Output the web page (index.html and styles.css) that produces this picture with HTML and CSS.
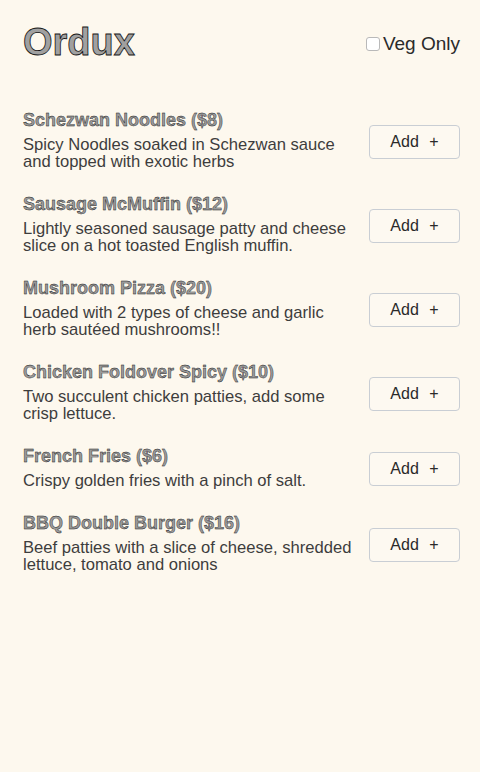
FILE: index.html
```html
<!DOCTYPE html>
<html>
<head>
<meta charset="utf-8">
<link rel="stylesheet" href="styles.css">
</head>
<body>
<div class="app">
  <header class="header">
    <h1 class="logo">Ordux</h1>
    <label class="veg"><span class="box"></span>Veg Only</label>
  </header>
  <ul class="menu">
    <li class="item">
      <div class="info">
        <div class="name">Schezwan Noodles ($8)</div>
        <div class="desc">Spicy Noodles soaked in Schezwan sauce and topped with exotic herbs</div>
      </div>
      <button class="add">Add <span class="plus">+</span></button>
    </li>
    <li class="item">
      <div class="info">
        <div class="name">Sausage McMuffin ($12)</div>
        <div class="desc">Lightly seasoned sausage patty and cheese slice on a hot toasted English muffin.</div>
      </div>
      <button class="add">Add <span class="plus">+</span></button>
    </li>
    <li class="item">
      <div class="info">
        <div class="name">Mushroom Pizza ($20)</div>
        <div class="desc">Loaded with 2 types of cheese and garlic herb sautéed mushrooms!!</div>
      </div>
      <button class="add">Add <span class="plus">+</span></button>
    </li>
    <li class="item">
      <div class="info">
        <div class="name">Chicken Foldover Spicy ($10)</div>
        <div class="desc">Two succulent chicken patties, add some crisp lettuce.</div>
      </div>
      <button class="add">Add <span class="plus">+</span></button>
    </li>
    <li class="item">
      <div class="info">
        <div class="name">French Fries ($6)</div>
        <div class="desc">Crispy golden fries with a pinch of salt.</div>
      </div>
      <button class="add">Add <span class="plus">+</span></button>
    </li>
    <li class="item">
      <div class="info">
        <div class="name">BBQ Double Burger ($16)</div>
        <div class="desc">Beef patties with a slice of cheese, shredded lettuce, tomato and onions</div>
      </div>
      <button class="add">Add <span class="plus">+</span></button>
    </li>
  </ul>
</div>
</body>
</html>
```
FILE: styles.css
```css
html, body {
  margin: 0;
  padding: 0;
  background: #fdf8ee;
  height: 100%;
}
body {
  font-family: "Liberation Sans", Arial, sans-serif;
  color: #3d3d3d;
}
.app {
  padding: 20px 20px 20px 23px;
}
.header {
  display: flex;
  align-items: center;
  justify-content: space-between;
  height: 44px;
}
.logo {
  margin: 0;
  font-size: 38px;
  font-weight: bold;
  color: #a0a0a0;
  -webkit-text-stroke: 0.8px #151515;
}
.veg {
  display: flex;
  align-items: center;
  gap: 3px;
  font-size: 19px;
  color: #2a2a2a;
  margin-top: 3px;
}
.box {
  width: 12px;
  height: 12px;
  border: 1px solid #b9b9b9;
  border-radius: 3px;
  background: #fff;
}
.menu {
  list-style: none;
  margin: 46px 0 0;
  padding: 0;
  display: flex;
  flex-direction: column;
  gap: 24px;
}
.item {
  display: flex;
  align-items: center;
  gap: 15px;
}
.info {
  flex: 1;
}
.name {
  font-size: 18px;
  font-weight: bold;
  color: #9a9a9a;
  -webkit-text-stroke: 0.4px #151515;
  margin-bottom: 5px;
}
.desc {
  font-size: 16.6px;
  line-height: 17px;
}
.add {
  width: 91px;
  height: 34px;
  margin-top: 3px;
  border: 1px solid #c9ced4;
  border-radius: 4px;
  background: #fdf9f1;
  font-family: "Liberation Sans", Arial, sans-serif;
  font-size: 16px;
  color: #2a2a2a;
  padding: 0;
}
.plus {
  margin-left: 6px;
}
```
